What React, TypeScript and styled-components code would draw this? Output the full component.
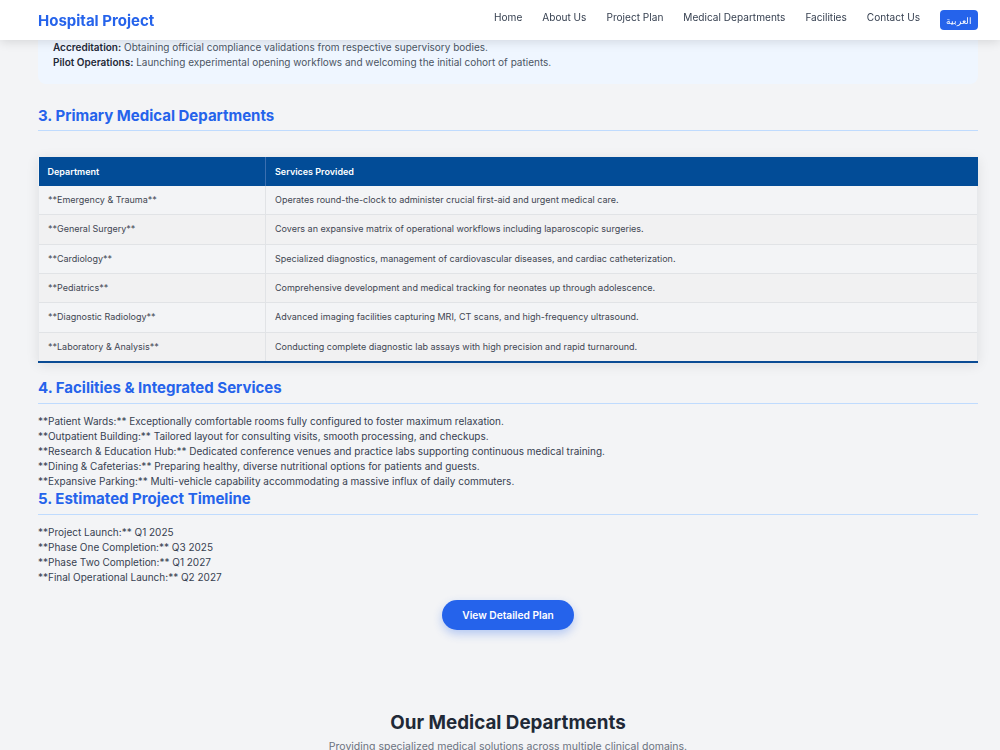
import React from "react";
import styled, { createGlobalStyle } from "styled-components";

const Global = createGlobalStyle`
  html, body { margin: 0; padding: 0; }
  body {
    background: #f3f4f6;
    font-family: Inter, "Noto Sans", sans-serif;
    color: #374151;
  }
  * { box-sizing: border-box; }
`;

const Header = styled.header`
  position: fixed;
  top: 0;
  left: 0;
  right: 0;
  height: 40px;
  background: #ffffff;
  box-shadow: 0 2px 10px rgba(0, 0, 0, 0.12);
  display: flex;
  align-items: center;
  justify-content: space-between;
  padding: 0 22px 0 38px;
  z-index: 10;
`;

const Logo = styled.div`
  font-size: 15px;
  font-weight: 700;
  color: #2563eb;
`;

const Nav = styled.nav`
  display: flex;
  align-items: center;
  gap: 20px;
`;

const NavLink = styled.a`
  font-size: 10.1px;
  color: #374151;
  text-decoration: none;
  margin-top: -6px;
`;

const LangButton = styled.button`
  background: #2563eb;
  color: #fff;
  border: none;
  border-radius: 4px;
  font-family: "Noto Sans", sans-serif;
  font-size: 8.5px;
  height: 20px;
  padding: 0 6px;
`;

const Main = styled.main`
  padding: 0 22px 0 38px;
  display: flex;
  flex-direction: column;
`;

const InfoBox = styled.div`
  background: #eff6ff;
  border-radius: 0 0 8px 8px;
  padding: 40px 15px 14px;
  font-size: 10px;
  line-height: 15px;
  color: #4b5563;
`;

const InfoLine = styled.div``;

const Strong = styled.strong`
  color: #1f2937;
  font-weight: 600;
`;

const SectionTitle = styled.h2<{ $top: number; $pad?: number }>`
  margin: ${(p) => p.$top}px 0 0;
  font-size: 15px;
  line-height: 20px;
  font-weight: 700;
  color: #2563eb;
  padding-bottom: ${(p) => p.$pad ?? 5}px;
  border-bottom: 1.5px solid #bfdbfe;
`;

const TableWrap = styled.div`
  margin-top: 26px;
  box-shadow: 0 2px 12px rgba(0, 0, 0, 0.09);
  border-bottom: 2px solid #0a4b94;
`;

const Table = styled.table`
  width: 100%;
  border-collapse: collapse;
  font-size: 9px;
`;

const Th = styled.th<{ $w?: number }>`
  background: #024c97;
  color: #fff;
  text-align: left;
  font-weight: 600;
  padding: 8px 9px;
  line-height: 13px;
  width: ${(p) => (p.$w ? `${p.$w}px` : "auto")};
  border-right: 1px solid #3b6fb0;
  &:last-child { border-right: none; }
`;

const Tr = styled.tr<{ $alt: boolean }>`
  background: ${(p) => (p.$alt ? "#f1f1f2" : "#f3f4f6")};
  border-bottom: 1px solid #e1e3e6;
  &:last-child { border-bottom: none; }
`;

const Td = styled.td`
  padding: 8px 9px;
  line-height: 12.35px;
  color: #3f4652;
  border-left: 1px solid #e7e9ec;
  border-right: 1px solid #e1e3e6;
  &:last-child { border-right: 1px solid #e7e9ec; }
`;

const List = styled.div`
  margin-top: 10px;
  font-size: 10px;
  line-height: 15px;
  color: #374151;
`;

const ListLine = styled.div``;

const ButtonRow = styled.div`
  display: flex;
  justify-content: center;
  margin-top: 15px;
`;

const PrimaryButton = styled.button`
  background: #2563eb;
  color: #fff;
  border: none;
  border-radius: 999px;
  height: 30px;
  padding: 0 20px;
  font-family: Inter, sans-serif;
  font-size: 10.2px;
  font-weight: 600;
  box-shadow: 0 4px 10px rgba(37, 99, 235, 0.3);
`;

const DeptSection = styled.section`
  padding-top: 80px;
  text-align: center;
`;

const DeptTitle = styled.h2`
  margin: 0;
  font-size: 18.8px;
  line-height: 26px;
  font-weight: 700;
  color: #1f2937;
`;

const DeptSub = styled.p`
  margin: 3px 0 0;
  font-size: 10.5px;
  line-height: 15px;
  color: #6b7280;
`;

const departments = [
  ["**Emergency & Trauma**", "Operates round-the-clock to administer crucial first-aid and urgent medical care."],
  ["**General Surgery**", "Covers an expansive matrix of operational workflows including laparoscopic surgeries."],
  ["**Cardiology**", "Specialized diagnostics, management of cardiovascular diseases, and cardiac catheterization."],
  ["**Pediatrics**", "Comprehensive development and medical tracking for neonates up through adolescence."],
  ["**Diagnostic Radiology**", "Advanced imaging facilities capturing MRI, CT scans, and high-frequency ultrasound."],
  ["**Laboratory & Analysis**", "Conducting complete diagnostic lab assays with high precision and rapid turnaround."],
];

const facilities = [
  "**Patient Wards:** Exceptionally comfortable rooms fully configured to foster maximum relaxation.",
  "**Outpatient Building:** Tailored layout for consulting visits, smooth processing, and checkups.",
  "**Research & Education Hub:** Dedicated conference venues and practice labs supporting continuous medical training.",
  "**Dining & Cafeterias:** Preparing healthy, diverse nutritional options for patients and guests.",
  "**Expansive Parking:** Multi-vehicle capability accommodating a massive influx of daily commuters.",
];

const timeline = [
  "**Project Launch:** Q1 2025",
  "**Phase One Completion:** Q3 2025",
  "**Phase Two Completion:** Q1 2027",
  "**Final Operational Launch:** Q2 2027",
];

const navItems = ["Home", "About Us", "Project Plan", "Medical Departments", "Facilities", "Contact Us"];

export default function App() {
  return (
    <>
      <Global />
      <Header>
        <Logo>Hospital Project</Logo>
        <Nav>
          {navItems.map((n) => (
            <NavLink key={n} href="#">{n}</NavLink>
          ))}
          <LangButton>العربية</LangButton>
        </Nav>
      </Header>
      <Main>
        <InfoBox>
          <InfoLine>
            <Strong>Accreditation:</Strong> Obtaining official compliance validations from respective supervisory bodies.
          </InfoLine>
          <InfoLine>
            <Strong>Pilot Operations:</Strong> Launching experimental opening workflows and welcoming the initial cohort of patients.
          </InfoLine>
        </InfoBox>

        <SectionTitle $top={22} $pad={4}>3. Primary Medical Departments</SectionTitle>
        <TableWrap>
          <Table>
            <thead>
              <tr>
                <Th $w={227}>Department</Th>
                <Th>Services Provided</Th>
              </tr>
            </thead>
            <tbody>
              {departments.map(([d, s], i) => (
                <Tr key={d} $alt={i % 2 === 1}>
                  <Td>{d}</Td>
                  <Td>{s}</Td>
                </Tr>
              ))}
            </tbody>
          </Table>
        </TableWrap>

        <SectionTitle $top={15}>4. Facilities &amp; Integrated Services</SectionTitle>
        <List>
          {facilities.map((f) => (
            <ListLine key={f}>{f}</ListLine>
          ))}
        </List>

        <SectionTitle $top={0} $pad={5}>5. Estimated Project Timeline</SectionTitle>
        <List>
          {timeline.map((t) => (
            <ListLine key={t}>{t}</ListLine>
          ))}
        </List>

        <ButtonRow>
          <PrimaryButton>View Detailed Plan</PrimaryButton>
        </ButtonRow>

        <DeptSection>
          <DeptTitle>Our Medical Departments</DeptTitle>
          <DeptSub>Providing specialized medical solutions across multiple clinical domains.</DeptSub>
        </DeptSection>
      </Main>
    </>
  );
}
